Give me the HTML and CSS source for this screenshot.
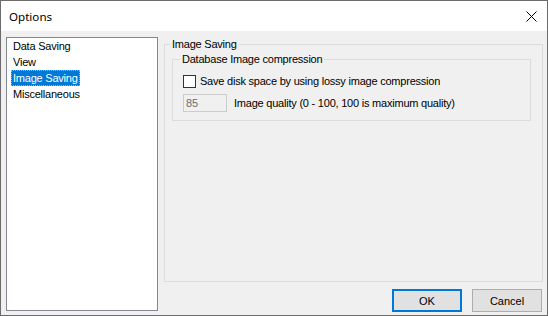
FILE: index.html
```html
<!DOCTYPE html>
<html>
    <head>
        <meta charset="utf-8">
        <title>Options</title>
        <link rel="stylesheet" href="styles.css">
    </head>
    <body>
        <div class="dialog">
            <div class="dialog__title">
                <span>Options</span>
                <svg class="dialog__close" width="11" height="11" viewBox="0 0 11 11">
                    <path d="M0.5 0.5 L10.5 10.5 M10.5 0.5 L0.5 10.5" stroke="#000" stroke-width="1" fill="none"/>
                </svg>
            </div>
            <div class="dialog__body">
                <ul class="pages">
                    <li>Data Saving</li>
                    <li>View</li>
                    <li class="pages__item--active"><span class="pages__selected">Image Saving</span></li>
                    <li>Miscellaneous</li>
                </ul>
                <div class="panel">
                    <fieldset class="group">
                        <legend>Image Saving</legend>
                        <fieldset class="group group--inner">
                            <legend>Database Image compression</legend>
                            <label class="check">
                                <span class="check__box"></span>
                                Save disk space by using lossy image compression
                            </label>
                            <div class="quality">
                                <input class="quality__input" type="text" value="85" disabled>
                                <span>Image quality (0 - 100, 100 is maximum quality)</span>
                            </div>
                        </fieldset>
                    </fieldset>
                    <div class="buttons">
                        <button class="btn btn--default">OK</button>
                        <button class="btn">Cancel</button>
                    </div>
                </div>
            </div>
        </div>
    </body>
</html>
```

FILE: styles.css
```css
:root {
    --font-ui: 'Liberation Sans', Arial, sans-serif;
    --font-title: 'Noto Sans', 'Open Sans', sans-serif;

    --color-face: #f0f0f0;
    --color-window: #fff;
    --color-frame: #6b6b6b;
    --color-group: #dcdcdc;
    --color-list-border: #828790;
    --color-select: #0078d7;
    --color-button: #e1e1e1;
    --color-disabled: #6d6d6d;
}
body {
    margin: 0;
}
.dialog {
    box-sizing: border-box;
    width: 548px;
    height: 316px;
    border: 1px solid var(--color-frame);
    background-color: var(--color-face);
    font-family: var(--font-ui);
    font-size: 11px;
    letter-spacing: -0.22px;
    color: #000;
}
.dialog__title {
    display: flex;
    align-items: center;
    justify-content: space-between;
    height: 30px;
    padding: 0 10px 0 8px;
    background-color: var(--color-window);
    font-family: var(--font-title);
    font-size: 11.6px;
    letter-spacing: 0;
}
.dialog__close {
    display: block;
}
.dialog__body {
    display: flex;
    gap: 6px;
    height: 284px;
    padding: 6px 0 0 5px;
    box-sizing: border-box;
}
.pages {
    box-sizing: border-box;
    width: 152px;
    height: 274px;
    margin: 0;
    padding: 0;
    list-style: none;
    border: 1px solid var(--color-list-border);
    background-color: var(--color-window);
}
.pages li {
    height: 16px;
    line-height: 16px;
    padding-left: 6px;
}
.pages li.pages__item--active {
    padding-left: 4px;
}
.pages__selected {
    display: inline-block;
    box-sizing: border-box;
    height: 16px;
    line-height: 14px;
    padding: 0 1px;
    background-color: var(--color-select);
    color: #fff;
    border: 1px dotted #f0a040;
}
.panel {
    display: flex;
    flex-direction: column;
    width: 379px;
    height: 274px;
    margin-top: 1px;
}
.group {
    flex: 1;
    min-width: 0;
    margin: 0;
    padding: 0 0 0 5px;
    border: 1px solid var(--color-group);
}
.group legend {
    padding: 0 2px;
    line-height: 13px;
}
.group--inner {
    flex: none;
    box-sizing: border-box;
    width: 359px;
    margin: 2px 0 0 2px;
    padding: 9px 0 8px 7px;
}
.check {
    display: flex;
    align-items: center;
    height: 13px;
    margin-left: 3px;
    line-height: 13px;
}
.check__box {
    box-sizing: border-box;
    width: 13px;
    height: 13px;
    margin-right: 4px;
    border: 1px solid #333;
    background-color: var(--color-window);
}
.quality {
    display: flex;
    align-items: center;
    gap: 7px;
    margin: 6px 0 0 3px;
}
.quality__input {
    box-sizing: border-box;
    width: 44px;
    height: 18px;
    margin: 0;
    padding: 0 2px;
    border: 1px solid #ccc;
    background-color: var(--color-face);
    font-family: var(--font-ui);
    font-size: 11px;
    color: var(--color-disabled);
}
.buttons {
    display: flex;
    justify-content: flex-end;
    gap: 10px;
    margin-top: 7px;
    padding-right: 1px;
}
.btn {
    box-sizing: border-box;
    width: 70px;
    height: 23px;
    margin: 0;
    padding: 0;
    border: 1px solid #adadad;
    background-color: var(--color-button);
    font-family: var(--font-ui);
    font-size: 11px;
    color: #000;
}
.btn--default {
    border: 2px solid var(--color-select);
}
```
